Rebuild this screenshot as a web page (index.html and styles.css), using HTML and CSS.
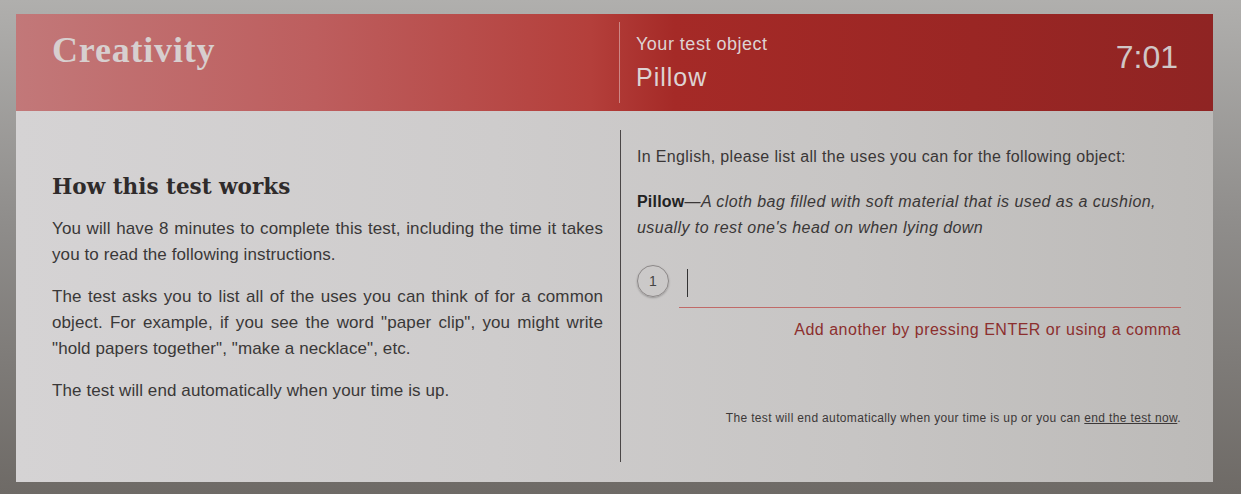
FILE: index.html
```html
<!DOCTYPE html>
<html lang="en">
<head>
<meta charset="utf-8">
<title>Creativity test</title>
<link rel="stylesheet" href="styles.css">
</head>
<body>
<div class="screen">
  <main class="panel">
    <header class="bar">
      <div class="bar-left">
        <h1 class="brand">Creativity</h1>
      </div>
      <div class="bar-right">
        <div class="object">
          <div class="object-label">Your test object</div>
          <div class="object-name">Pillow</div>
        </div>
        <div class="timer">7:01</div>
      </div>
    </header>
    <section class="content">
      <div class="col-left">
        <h2 class="howto">How this test works</h2>
        <p>You will have 8 minutes to complete this test, including the time it takes you to read the following instructions.</p>
        <p>The test asks you to list all of the uses you can think of for a common object. For example, if you see the word "paper clip", you might write "hold papers together", "make a necklace", etc.</p>
        <p>The test will end automatically when your time is up.</p>
      </div>
      <div class="col-right">
        <p class="prompt">In English, please list all the uses you can for the following object:</p>
        <p class="definition"><b>Pillow</b>—<i>A cloth bag filled with soft material that is used as a cushion, usually to rest one's head on when lying down</i></p>
        <div class="entry">
          <span class="num">1</span>
          <div class="field"><span class="caret"></span></div>
        </div>
        <p class="hint">Add another by pressing ENTER or using a comma</p>
        <p class="footnote">The test will end automatically when your time is up or you can <a href="#">end the test now</a>.</p>
      </div>
    </section>
  </main>
</div>
</body>
</html>
```

FILE: styles.css
```css
html, body {
  margin: 0;
  padding: 0;
}
body {
  width: 1241px;
  height: 494px;
  overflow: hidden;
  background: linear-gradient(180deg, #b0afad 0%, #8f8d8b 45%, #6e6a66 100%);
  font-family: "Liberation Sans", Arial, sans-serif;
}
.screen {
  padding: 14px 28px 12px 16px;
}
.panel {
  width: 1197px;
  height: 468px;
  display: flex;
  flex-direction: column;
  background: linear-gradient(90deg, #d5d3d4 0%, #cecccc 40%, #c7c5c4 70%, #bcbab8 100%);
}
.bar {
  height: 97px;
  display: grid;
  grid-template-columns: 603px 1fr;
  background: linear-gradient(90deg, #c27879 0%, #bd5e5e 25%, #b43f3b 48%, #a52a27 55%, #9a2624 80%, #8f2423 100%);
}
.bar-left {
  padding: 16px 0 0 36px;
}
.brand {
  margin: 0;
  font-family: "Liberation Serif", "Times New Roman", serif;
  font-weight: bold;
  font-size: 36px;
  line-height: 40px;
  color: #d7cfcf;
  letter-spacing: 0.8px;
}
.bar-right {
  margin: 8px 0;
  border-left: 1px solid rgba(230, 200, 200, 0.55);
  display: flex;
  justify-content: space-between;
  padding: 0 35px 0 16px;
}
.object {
  padding-top: 11px;
  color: #ddd3d3;
}
.object-label {
  font-size: 18px;
  line-height: 22px;
  letter-spacing: 0.5px;
}
.object-name {
  margin-top: 7px;
  font-size: 25px;
  line-height: 30px;
  letter-spacing: 1px;
}
.timer {
  padding-top: 15px;
  font-size: 32px;
  line-height: 40px;
  color: #d0c6c6;
}
.content {
  flex: 1;
  display: grid;
  grid-template-columns: 604px 1fr;
}
.col-left {
  padding: 61px 17px 0 36px;
  color: #3a3838;
}
.howto {
  margin: 0 0 14px;
  font-family: "DejaVu Serif", "Liberation Serif", serif;
  font-weight: bold;
  font-size: 21.5px;
  line-height: 30px;
  color: #2f2b2b;
}
.col-left p {
  margin: 0 0 16px;
  font-size: 17px;
  line-height: 26px;
  letter-spacing: 0.1px;
  text-align: justify;
}
.col-right {
  margin: 19px 0 20px;
  border-left: 1px solid #4a4646;
  padding: 14px 32px 0 16px;
  display: flex;
  flex-direction: column;
  color: #3a3737;
}
.col-right p {
  margin: 0;
}
.prompt {
  font-size: 16px;
  line-height: 26px;
  letter-spacing: 0.35px;
}
.definition {
  margin-top: 19px !important;
  font-size: 16px;
  line-height: 26px;
  letter-spacing: 0.45px;
}
.definition b {
  color: #222;
  letter-spacing: 0.2px;
}
.entry {
  margin-top: 21px;
  display: flex;
  align-items: flex-start;
  gap: 10px;
}
.num {
  margin-top: 3px;
  width: 30px;
  height: 30px;
  border: 1px solid #8c8888;
  border-radius: 50%;
  box-shadow: 0 1px 2px rgba(0, 0, 0, 0.25);
  display: flex;
  align-items: center;
  justify-content: center;
  font-size: 14px;
  color: #444;
  flex: none;
}
.field {
  flex: 1;
  height: 46px;
  border-bottom: 1px solid #c06a68;
  padding: 7px 0 0 8px;
  box-sizing: border-box;
}
.caret {
  display: block;
  width: 1px;
  height: 28px;
  background: #333;
}
.hint {
  margin-top: 11px !important;
  text-align: right;
  font-size: 16px;
  line-height: 22px;
  letter-spacing: 0.5px;
  color: #8c2f2e;
}
.footnote {
  margin-top: auto !important;
  padding-bottom: 36px;
  text-align: right;
  font-size: 12px;
  line-height: 16px;
  letter-spacing: 0.35px;
  color: #3c3838;
}
.footnote a {
  color: #3c3838;
  text-decoration: underline;
}
```
